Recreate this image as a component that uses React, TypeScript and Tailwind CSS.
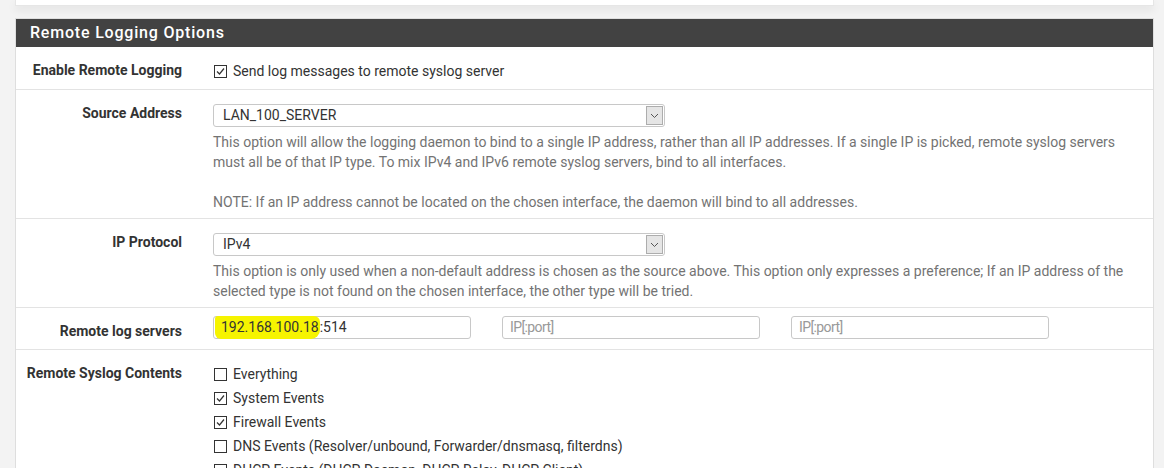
import React from 'react'

function Check({ checked }: { checked?: boolean }) {
  return (
    <span className="inline-flex h-[13px] w-[13px] shrink-0 items-center justify-center border border-[#333] bg-white">
      {checked && (
        <svg width="11" height="11" viewBox="0 0 11 11">
          <path d="M2 5.5 L4.5 8 L9 2.5" fill="none" stroke="#333" strokeWidth="1.2" />
        </svg>
      )}
    </span>
  )
}

function Select({ value }: { value: string }) {
  return (
    <div className="flex h-[23px] w-[452px] items-center rounded-[3px] border border-[#c8c8c8] bg-white pl-[9px] pr-[1px] text-[14px] text-[#333]">
      <span className="flex-1">{value}</span>
      <span className="flex h-[19px] w-[17px] items-center justify-center border border-[#adadad] bg-[#e5e5e5]">
        <svg width="9" height="6" viewBox="0 0 9 6">
          <path d="M1 1 L4.5 4.5 L8 1" fill="none" stroke="#555" strokeWidth="1" />
        </svg>
      </span>
    </div>
  )
}

function Row({ label, children, pad }: { label: string; children: React.ReactNode; pad: string }) {
  return (
    <div className="flex items-start border-t border-[#e3e3e3]">
      <div className="w-[182px] shrink-0 pr-[16px] pt-[13px] text-right text-[14px] leading-[20px] font-bold text-[#333]">{label}</div>
      <div className={`flex-1 pl-[15px] pr-[15px] ${pad}`}>{children}</div>
    </div>
  )
}

export default function App() {
  const contents = [
    { label: 'Everything', checked: false },
    { label: 'System Events', checked: true },
    { label: 'Firewall Events', checked: true },
    { label: 'DNS Events (Resolver/unbound, Forwarder/dnsmasq, filterdns)', checked: false },
    { label: 'DHCP Events (DHCP Daemon, DHCP Relay, DHCP Client)', checked: false },
    { label: 'PPP Events (PPPoE WAN Client, L2TP WAN Client, PPTP WAN Client)', checked: false },
  ]

  return (
    <div className="h-[468px] overflow-hidden bg-[#f3f3f3] font-['Roboto',sans-serif]">
      <div className="ml-[15px] mr-[10px]">
        <div className="h-[6px] border-x border-b border-[#e6e6e6] bg-white shadow-[0_4px_8px_rgba(0,0,0,0.08)]"></div>

        <div className="mt-[12px] border border-[#dedede] bg-white">
          <div className="flex h-[28px] items-center bg-[#424242] pl-[14px] text-[16px] font-medium tracking-[0.8px] text-white">
            Remote Logging Options
          </div>

          <div className="flex items-start">
            <div className="w-[182px] shrink-0 pr-[16px] pt-[13px] pb-[9px] text-right text-[14px] leading-[20px] font-bold text-[#333]">Enable Remote Logging</div>
            <div className="mt-[14px] flex h-[20px] items-center gap-[6px] pl-[16px] text-[14px] text-[#333]">
              <Check checked />
              <span>Send log messages to remote syslog server</span>
            </div>
          </div>

          <Row label="Source Address" pad="pt-[14px] pb-[6px]">
            <Select value="LAN_100_SERVER" />
            <div className="mt-[5px] text-[14px] leading-[20px] text-[#737373]">
              This option will allow the logging daemon to bind to a single IP address, rather than all IP addresses. If a single IP is picked, remote syslog servers must all be of that IP type. To mix IPv4 and IPv6 remote syslog servers, bind to all interfaces.
              <br />
              <br />
              NOTE: If an IP address cannot be located on the chosen interface, the daemon will bind to all addresses.
            </div>
          </Row>

          <Row label="IP Protocol" pad="pt-[14px] pb-[6px]">
            <Select value="IPv4" />
            <div className="mt-[5px] text-[14px] leading-[20px] text-[#737373]">
              This option is only used when a non-default address is chosen as the source above. This option only expresses a preference; If an IP address of the selected type is not found on the chosen interface, the other type will be tried.
            </div>
          </Row>

          <Row label="Remote log servers" pad="pt-[8px] pb-[10px]">
            <div className="flex gap-[31px]">
              <div className="flex h-[23px] w-[258px] items-center rounded-[3px] border border-[#c8c8c8] pl-[1px] text-[14px] text-[#333]">
                <span className="rounded-[6px] rounded-tl-[3px] rounded-br-[9px] bg-[#f6f400] pl-[6px] pr-[1px] py-[3px] leading-[17px]">192.168.100.18</span>
                <span>:514</span>
              </div>
              <div className="flex h-[23px] w-[258px] items-center rounded-[3px] border border-[#c8c8c8] pl-[7px] text-[14px] tracking-[-0.6px] text-[#999]">IP[:port]</div>
              <div className="flex h-[23px] w-[258px] items-center rounded-[3px] border border-[#c8c8c8] pl-[7px] text-[14px] tracking-[-0.6px] text-[#999]">IP[:port]</div>
            </div>
          </Row>

          <Row label="Remote Syslog Contents" pad="pt-[12px] pb-[10px]">
            <div className="flex flex-col pl-[1px]">
              {contents.map(c => (
                <div key={c.label} className="flex h-[24px] items-center gap-[6px] text-[14px] text-[#333]">
                  <Check checked={c.checked} />
                  <span>{c.label}</span>
                </div>
              ))}
            </div>
          </Row>
        </div>
      </div>
    </div>
  )
}
